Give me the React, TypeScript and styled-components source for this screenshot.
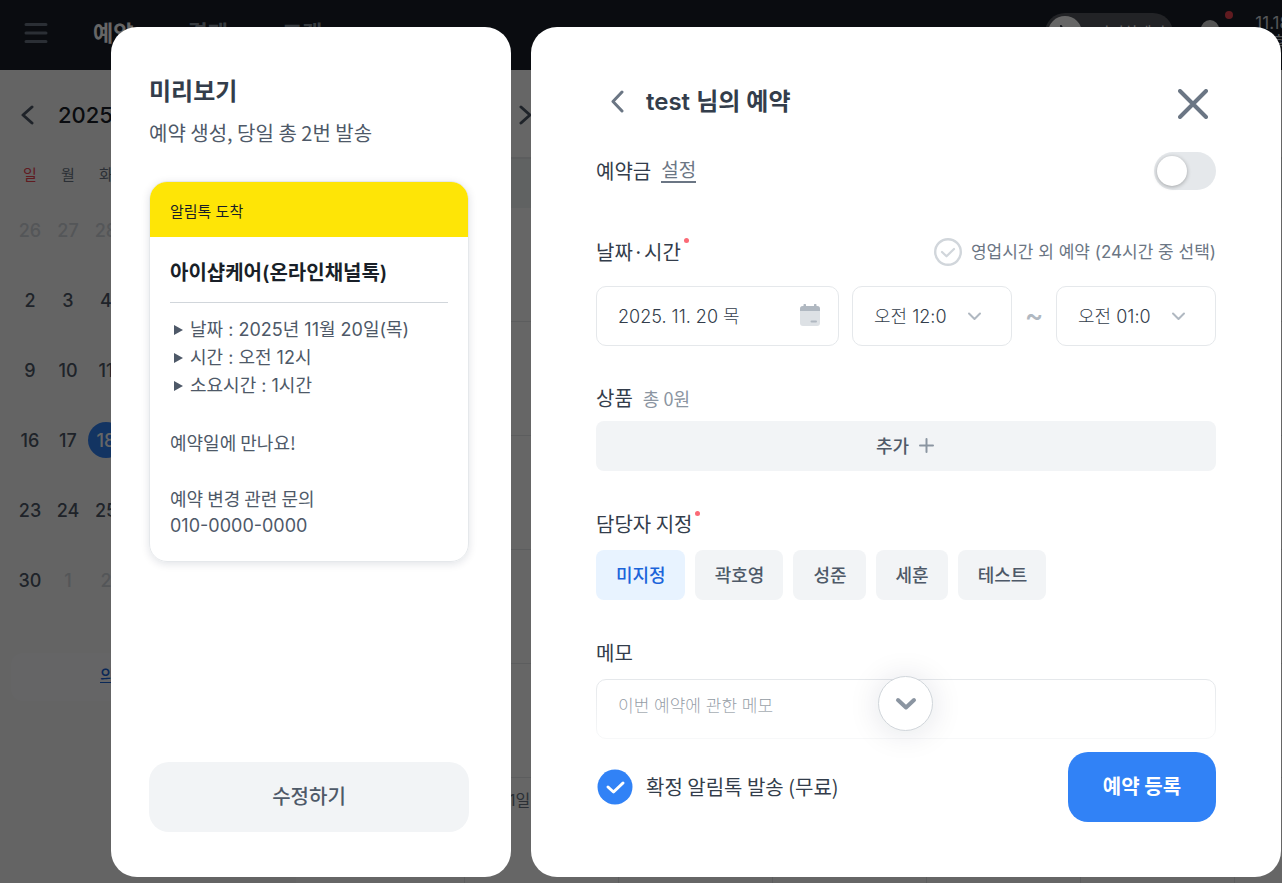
import React from "react";
import styled, { createGlobalStyle, css } from "styled-components";

const color = {
  ink: "#191f28",
  strong: "#333d4b",
  body: "#4e5968",
  sub: "#6b7684",
  muted: "#8b95a1",
  faint: "#b0b8c1",
  line: "#d1d6db",
  border: "#e5e8eb",
  fill: "#f2f4f6",
  blue: "#3182f6",
  red: "#f04452",
};

const koreanFont = `"Noto Sans CJK KR", Inter, sans-serif`;
const latinFont = `Inter, "Noto Sans CJK KR", sans-serif`;

const Global = createGlobalStyle`
  *, *::before, *::after { box-sizing: border-box; }
  body {
    margin: 0;
    overflow: hidden;
    color: ${color.strong};
    font-family: ${latinFont};
  }
  button, input, select { font: inherit; color: inherit; }
  button { border: 0; padding: 0; background: none; cursor: pointer; }
  h1, h2, h3, p, ul, fieldset { margin: 0; padding: 0; border: 0; }
  ul { list-style: none; }
  svg { display: block; flex: none; }
`;

/* ---------- page behind the dialogs ---------- */

const Page = styled.div`
  display: flex;
  flex-direction: column;
  height: 100vh;
  overflow: hidden;
`;

const TopBar = styled.header`
  display: flex;
  flex: none;
  align-items: center;
  height: 70px;
  padding: 0 0 4px 24px;
  background: ${color.ink};
  color: #fff;
`;

const Nav = styled.nav`
  display: flex;
  gap: 54px;
  margin-left: 45px;
`;

const NavLink = styled.a<{ $active?: boolean }>`
  color: ${(p) => (p.$active ? "#fff" : color.muted)};
  font-size: 22px;
  font-weight: 700;
  line-height: 30px;
  text-decoration: none;
`;

const TopTools = styled.div`
  display: flex;
  align-items: center;
  gap: 25px;
  margin: 0 -8px 0 auto;
`;

const ShopToggle = styled.button`
  display: flex;
  align-items: center;
  gap: 14px;
  width: 128px;
  height: 40px;
  padding: 3px;
  border-radius: 20px;
  background: #56585f;
  color: #fff;
  font-size: 15px;
  line-height: 16px;
  white-space: nowrap;
`;

const Knob = styled.span`
  display: grid;
  place-items: center;
  width: 34px;
  height: 34px;
  border-radius: 50%;
  background: #fff;
`;

const Bell = styled.button`
  position: relative;
  width: 32px;
  height: 28px;
`;

const Badge = styled.i`
  position: absolute;
  top: -8px;
  right: -3px;
  width: 8px;
  height: 8px;
  border-radius: 50%;
  background: ${color.red};
`;

const Clock = styled.div`
  color: ${color.line};
  font-size: 17px;
  line-height: 20px;
  white-space: nowrap;
`;

const Main = styled.div`
  display: flex;
  flex: 1;
`;

const Sidebar = styled.aside`
  flex: none;
  width: 296px;
  padding: 25px 11px;
  background: #fafafb;
`;

const Month = styled.div`
  display: flex;
  align-items: center;
  gap: 24px;
  padding-left: 9px;
  color: ${color.ink};
  font-size: 22px;
  font-weight: 500;
  line-height: 40px;
`;

const Calendar = styled.table`
  width: 266px;
  margin-top: 19px;
  border-collapse: collapse;
  table-layout: fixed;
  font-size: 18px;
  text-align: center;
`;

const DayName = styled.th<{ $sunday?: boolean }>`
  height: 41px;
  padding: 0 0 2px;
  color: ${(p) => (p.$sunday ? color.red : color.sub)};
  font-size: 15px;
  font-weight: 400;
`;

const Day = styled.td<{ $out?: boolean; $today?: boolean }>`
  height: 70px;
  padding: 0;
  color: ${(p) => (p.$out ? color.line : color.body)};
  font-weight: 500;
  ${(p) =>
    p.$today &&
    css`
      span {
        display: grid;
        place-items: center;
        width: 36px;
        height: 36px;
        margin: 0 auto;
        border-radius: 50%;
        background: ${color.blue};
        color: #fff;
      }
    `}
`;

const SideLink = styled.a`
  display: block;
  margin-top: 38px;
  padding: 0 0 4px 89px;
  border-radius: 12px;
  background: #fcfdfe;
  color: #1b64da;
  font-size: 16px;
  font-weight: 500;
  line-height: 44px;
`;

const Schedule = styled.section`
  flex: 1;
  min-width: 0;
`;

const ScheduleHead = styled.div`
  display: flex;
  align-items: center;
  height: 89px;
  padding: 2px 0 0 222px;
  border-bottom: 2px solid ${color.border};
`;

const TimeRow = styled.div<{ $tint?: boolean }>`
  height: ${(p) => (p.$tint ? 49 : 114)}px;
  border-bottom: ${(p) => (p.$tint ? 0 : 1)}px solid ${color.border};
  background: ${(p) => (p.$tint ? "#f0f6f4" : "transparent")};
`;

const DayColumns = styled.div`
  display: grid;
  grid-template-columns: repeat(6, 154px);
  height: 200px;
  padding-left: 168px;
`;

const DayColumn = styled.div`
  padding: 9px 0 0 44px;
  border-left: 1px solid ${color.border};
  color: ${color.sub};
  font-size: 16px;
`;

/* ---------- dialogs ---------- */

const Overlay = styled.div`
  position: fixed;
  inset: 0;
  display: flex;
  justify-content: flex-end;
  gap: 20px;
  padding: 27px 1px 6px;
  background: rgba(0, 0, 0, 0.6);
`;

const Panel = styled.section`
  display: flex;
  flex-direction: column;
  overflow: hidden;
  border-radius: 26px;
  background: #fff;
`;

const PreviewPanel = styled(Panel)`
  flex: 0 0 400px;
  padding: 49px 42px 45px 38px;
`;

const Title = styled.h2`
  font-size: 24px;
  font-weight: 600;
  line-height: 32px;
`;

const Lead = styled.p`
  margin-top: 9px;
  color: ${color.body};
  font-family: ${koreanFont};
  font-size: 20px;
  line-height: 32px;
  white-space: nowrap;
`;

const TalkCard = styled.article`
  margin-top: 32px;
  overflow: hidden;
  border: 1px solid ${color.border};
  border-radius: 18px;
  box-shadow: 0 2px 8px rgba(0, 27, 55, 0.12);
`;

const TalkHead = styled.header`
  height: 55px;
  padding: 0 20px;
  background: #fee506;
  color: ${color.ink};
  font-size: 15px;
  line-height: 60px;
`;

const TalkBody = styled.div`
  padding: 20px 20px 21px;
  color: ${color.body};
  font-size: 18px;
  line-height: 28px;
`;

const TalkTitle = styled.h3`
  margin-bottom: 13px;
  padding-bottom: 13px;
  border-bottom: 1px solid ${color.line};
  color: ${color.ink};
  font-size: 20px;
  font-weight: 600;
  line-height: 32px;
  white-space: nowrap;
`;

const Fact = styled.li`
  display: flex;
  align-items: center;
  gap: 7px;
  padding-left: 4px;
  white-space: nowrap;
`;

const Note = styled.p`
  margin-top: 28px;
  font-family: ${koreanFont};
`;

const Phone = styled.p`
  font-family: ${latinFont};
`;

const EditButton = styled.button`
  height: 70px;
  margin-top: auto;
  padding-bottom: 4px;
  border-radius: 20px;
  background: ${color.fill};
  color: ${color.body};
  font-size: 20px;
  font-weight: 500;
`;

const BookingPanel = styled(Panel)`
  flex: 0 1 750px;
  padding: 55px 65px;
`;

const BookingHead = styled.header`
  display: flex;
  align-items: center;
  height: 40px;
  padding: 0 8px 0 14px;
`;

const BookingTitle = styled(Title)`
  flex: 1;
  margin-left: 21px;
`;

const CloseButton = styled.button`
  padding-top: 4px;
`;

const Row = styled.div`
  display: flex;
  align-items: center;
`;

const Label = styled.span`
  font-family: ${koreanFont};
  font-size: 20px;
  line-height: 28px;
`;

const FieldLabel = styled.label`
  font-family: ${koreanFont};
  font-size: 20px;
  line-height: 28px;
`;

const Required = styled.i`
  align-self: flex-start;
  width: 5px;
  height: 5px;
  margin: 1px 0 0 3px;
  border-radius: 50%;
  background: #fb6a76;
`;

const DepositRow = styled(Row)`
  height: 38px;
  margin-top: 30px;
`;

const SettingLink = styled.a`
  margin: 2px 0 0 10px;
  border-bottom: 2px solid ${color.sub};
  color: ${color.sub};
  font-size: 19px;
  line-height: 20px;
  text-decoration: none;
`;

const Switch = styled.input`
  width: 62px;
  height: 38px;
  margin: 0 0 0 auto;
  padding: 3px;
  border-radius: 19px;
  background: ${color.border};
  appearance: none;

  &::before {
    content: "";
    display: block;
    width: 30px;
    height: 30px;
    margin-top: 1px;
    border-radius: 50%;
    background: #fff;
    box-shadow: 0 1px 4px rgba(0, 0, 0, 0.3);
  }
`;

const DateRow = styled(Row)`
  margin-top: 47px;
`;

const CheckLabel = styled.label`
  display: flex;
  align-items: center;
  gap: 9px;
  margin-left: auto;
  color: ${color.sub};
  font-size: 17px;
  line-height: 30px;
  white-space: nowrap;
`;

const HiddenCheck = styled.input`
  position: absolute;
  opacity: 0;
`;

const Fields = styled.div`
  display: grid;
  grid-template-columns: 243px 13px 1fr 44px 1fr;
  align-items: center;
  margin-top: 19px;
`;

const Field = styled.div`
  display: flex;
  align-items: center;
  height: 60px;
  padding: 0 18px 2px 21px;
  border: 1px solid ${color.border};
  border-radius: 10px;
  font-size: 18px;
`;

const TimeField = styled(Field)`
  padding: 0 29px 0 21px;
`;

const FirstTime = styled(TimeField)`
  grid-column: 3;
`;

const DateInput = styled.input`
  flex: 1;
  min-width: 0;
  padding: 0;
  border: 0;
  outline: 0;
  font-weight: 300;
`;

const TimeSelect = styled.select`
  flex: 1;
  min-width: 0;
  padding: 0;
  border: 0;
  outline: 0;
  background: none;
  appearance: none;
  font-weight: 300;
  white-space: nowrap;
`;

const Tilde = styled.span`
  padding-bottom: 2px;
  color: ${color.faint};
  font-size: 28px;
  font-weight: 500;
  line-height: 30px;
  text-align: center;
`;

const ProductRow = styled(Row)`
  gap: 10px;
  align-items: baseline;
  margin-top: 38px;
`;

const Total = styled.span`
  color: ${color.muted};
  font-family: ${koreanFont};
  font-size: 18px;
  line-height: 28px;
`;

const AddButton = styled.button`
  display: flex;
  align-items: center;
  justify-content: center;
  gap: 10px;
  height: 50px;
  margin-top: 9px;
  padding: 0 2px 2px 0;
  border-radius: 8px;
  background: ${color.fill};
  color: ${color.body};
  font-size: 18px;
  font-weight: 500;
`;

const StaffRow = styled(Row)`
  margin-top: 39px;
`;

const Chips = styled.div`
  display: flex;
  flex-wrap: wrap;
  gap: 10px;
  margin-top: 12px;
`;

const Chip = styled.button<{ $on?: boolean }>`
  height: 50px;
  padding: 0 19px 2px 20px;
  border-radius: 8px;
  background: ${(p) => (p.$on ? "#e8f3ff" : color.fill)};
  color: ${(p) => (p.$on ? "#1b64da" : color.body)};
  font-size: 18px;
  font-weight: 500;
`;

const MemoArea = styled.div`
  position: relative;
  display: flex;
  flex-direction: column;
  margin-top: 39px;

  &::after {
    content: "";
    position: absolute;
    inset: auto 0 0;
    height: 60px;
    background: linear-gradient(rgba(255, 255, 255, 0), rgba(255, 255, 255, 0.7));
    pointer-events: none;
  }
`;

const MemoInput = styled.input`
  height: 60px;
  margin-top: 12px;
  padding: 0 21px 6px;
  border: 1px solid ${color.border};
  border-radius: 10px;
  outline: 0;
  font-size: 17px;
  font-weight: 300;

  &::placeholder {
    color: ${color.sub};
    opacity: 1;
  }
`;

const ScrollButton = styled.button`
  position: absolute;
  z-index: 1;
  bottom: 8px;
  left: 50%;
  display: grid;
  place-items: center;
  width: 55px;
  height: 55px;
  margin-left: -28px;
  border: 1px solid ${color.line};
  border-radius: 50%;
  background: #fff;
  box-shadow: 0 2px 32px rgba(0, 27, 55, 0.12);
`;

const Footer = styled.footer`
  display: flex;
  align-items: center;
  margin-top: 13px;
`;

const ConfirmLabel = styled.label`
  display: flex;
  align-items: center;
  gap: 13px;
  font-family: ${koreanFont};
  font-size: 20px;
  line-height: 30px;
`;

const SubmitButton = styled.button`
  width: 148px;
  height: 70px;
  margin-left: auto;
  padding-bottom: 3px;
  border-radius: 20px;
  background: ${color.blue};
  color: #fff;
  font-size: 20px;
  font-weight: 700;
`;

/* ---------- icons ---------- */

type StrokeProps = { d: string; w: number; h: number; stroke: string; width: number };

const Stroke = ({ d, w, h, stroke, width }: StrokeProps) => (
  <svg width={w} height={h} viewBox={`0 0 ${w} ${h}`} fill="none" aria-hidden="true">
    <path d={d} stroke={stroke} strokeWidth={width} strokeLinecap="round" strokeLinejoin="round" />
  </svg>
);

const SelectArrow = () => <Stroke d="M2 2.500 7.500 8 13 2.500" w={15} h={11} stroke={color.faint} width={2} />;

const CalendarIcon = () => (
  <svg width="20" height="22" viewBox="0 0 20 22" aria-hidden="true">
    <rect y="2" width="20" height="20" rx="3" fill="#dde1e5" />
    <path d="M0 7V5a3 3 0 0 1 3-3h.5V1a1 1 0 0 1 2.500 0v1h8V1a1 1 0 0 1 2.500 0v1h.5a3 3 0 0 1 3 3v2z" fill={color.faint} />
    <rect x="10.500" y="16.500" width="6.500" height="2" rx="1" fill={color.faint} />
  </svg>
);

const RingCheck = () => (
  <svg width="28" height="28" viewBox="0 0 28 28" fill="none" aria-hidden="true">
    <circle cx="14" cy="14" r="12.800" stroke={color.line} strokeWidth="2.400" />
    <path d="m8 14 4.500 4.300L20 11" stroke={color.line} strokeWidth="2.200" strokeLinecap="round" strokeLinejoin="round" />
  </svg>
);

const SolidCheck = () => (
  <svg width="37" height="36" viewBox="0 0 37 36" fill="none" aria-hidden="true">
    <circle cx="19" cy="18" r="17.500" fill={color.blue} />
    <path d="m12 18 5.500 5L27 14" stroke="#fff" strokeWidth="3" strokeLinecap="round" strokeLinejoin="round" />
  </svg>
);

const Triangle = () => (
  <svg width="9" height="10" viewBox="0 0 9 10" aria-hidden="true">
    <path d="M0 0 9 5 0 10z" fill={color.body} />
  </svg>
);

/* ---------- data ---------- */

const dayNames = ["일", "월", "화", "수", "목", "금", "토"];
const weeks = [
  [26, 27, 28, 29, 30, 31, 1],
  [2, 3, 4, 5, 6, 7, 8],
  [9, 10, 11, 12, 13, 14, 15],
  [16, 17, 18, 19, 20, 21, 22],
  [23, 24, 25, 26, 27, 28, 29],
  [30, 1, 2, 3, 4, 5, 6],
];
const isOutside = (week: number, day: number) => (week === 0 && day > 20) || (week === 5 && day < 20);

const facts = ["날짜 : 2025년 11월 20일(목)", "시간 : 오전 12시", "소요시간 : 1시간"];
const staff = ["미지정", "곽호영", "성준", "세훈", "테스트"];

const Background = () => (
  <Page aria-hidden="true">
    <TopBar>
      <Stroke d="M2 2.500H22M2 11H22M2 19.500H22" w={24} h={22} stroke={color.sub} width={3} />
      <Nav>
        <NavLink href="#booking" $active>예약</NavLink>
        <NavLink href="#payment">결제</NavLink>
        <NavLink href="#customer">고객</NavLink>
      </Nav>
      <TopTools>
        <ShopToggle>
          <Knob>
            <Stroke d="M6 3 9 9V13" w={20} h={20} stroke={color.strong} width={2} />
          </Knob>
          아이샵케어
        </ShopToggle>
        <Bell>
          <svg width="24" height="28" viewBox="0 0 24 28" aria-hidden="true">
            <path d="M12 1a9 9 0 0 0-9 9v8l-2 4h22l-2-4v-8a9 9 0 0 0-9-9z" fill="#d0d0d0" />
          </svg>
          <Badge />
        </Bell>
        <Clock>
          11.18
          <br />
          오후
        </Clock>
      </TopTools>
    </TopBar>
    <Main>
      <Sidebar>
        <Month>
          <Stroke d="M12 3 3 11 12 19" w={14} h={22} stroke={color.body} width={3} />
          2025. 11
        </Month>
        <Calendar>
          <thead>
            <tr>
              {dayNames.map((name, i) => (
                <DayName key={name} $sunday={i === 0}>{name}</DayName>
              ))}
            </tr>
          </thead>
          <tbody>
            {weeks.map((week, w) => (
              <tr key={w}>
                {week.map((day) => (
                  <Day key={day} $out={isOutside(w, day)} $today={day === 18}>
                    <span>{day}</span>
                  </Day>
                ))}
              </tr>
            ))}
          </tbody>
        </Calendar>
        <SideLink href="#feedback">의견 보내기</SideLink>
      </Sidebar>
      <Schedule>
        <ScheduleHead>
          <Stroke d="M3 3 12 11 3 19" w={14} h={22} stroke={color.body} width={3} />
        </ScheduleHead>
        <TimeRow $tint />
        <TimeRow />
        <TimeRow />
        <TimeRow />
        <TimeRow />
        <TimeRow />
        <DayColumns>
          <DayColumn>1일</DayColumn>
          <DayColumn />
          <DayColumn />
          <DayColumn />
          <DayColumn />
          <DayColumn />
        </DayColumns>
      </Schedule>
    </Main>
  </Page>
);

export default function App() {
  return (
    <>
      <Global />
      <Background />
      <Overlay>
        <PreviewPanel role="dialog" aria-label="미리보기">
          <Title>미리보기</Title>
          <Lead>예약 생성, 당일 총 2번 발송</Lead>
          <TalkCard>
            <TalkHead>알림톡 도착</TalkHead>
            <TalkBody>
              <TalkTitle>아이샵케어(온라인채널톡)</TalkTitle>
              <ul>
                {facts.map((fact) => (
                  <Fact key={fact}>
                    <Triangle />
                    {fact}
                  </Fact>
                ))}
              </ul>
              <Note>예약일에 만나요!</Note>
              <Note>예약 변경 관련 문의</Note>
              <Phone>010-0000-0000</Phone>
            </TalkBody>
          </TalkCard>
          <EditButton>수정하기</EditButton>
        </PreviewPanel>

        <BookingPanel role="dialog" aria-label="test 님의 예약">
          <BookingHead>
            <button aria-label="뒤로">
              <Stroke d="M12 2 3 11.500 12 21" w={15} h={24} stroke={color.sub} width={3} />
            </button>
            <BookingTitle>test 님의 예약</BookingTitle>
            <CloseButton aria-label="닫기">
              <Stroke d="M2 2 28 28M28 2 2 28" w={30} h={30} stroke={color.sub} width={4} />
            </CloseButton>
          </BookingHead>

          <DepositRow>
            <FieldLabel htmlFor="deposit">예약금</FieldLabel>
            <SettingLink href="#deposit">설정</SettingLink>
            <Switch id="deposit" type="checkbox" role="switch" />
          </DepositRow>

          <DateRow>
            <FieldLabel htmlFor="date">날짜·시간</FieldLabel>
            <Required />
            <CheckLabel>
              <HiddenCheck type="checkbox" />
              <RingCheck />
              영업시간 외 예약 (24시간 중 선택)
            </CheckLabel>
          </DateRow>
          <Fields>
            <Field>
              <DateInput id="date" defaultValue="2025. 11. 20 목" />
              <CalendarIcon />
            </Field>
            <FirstTime>
              <TimeSelect aria-label="시작 시간">
                <option>오전 12:0</option>
              </TimeSelect>
              <SelectArrow />
            </FirstTime>
            <Tilde>~</Tilde>
            <TimeField>
              <TimeSelect aria-label="종료 시간">
                <option>오전 01:0</option>
              </TimeSelect>
              <SelectArrow />
            </TimeField>
          </Fields>

          <ProductRow>
            <Label>상품</Label>
            <Total>총 0원</Total>
          </ProductRow>
          <AddButton>
            추가
            <Stroke d="M7.500 1V14M1 7.500H14" w={15} h={15} stroke={color.muted} width={2} />
          </AddButton>

          <StaffRow>
            <Label>담당자 지정</Label>
            <Required />
          </StaffRow>
          <Chips>
            {staff.map((name, i) => (
              <Chip key={name} $on={i === 0} aria-pressed={i === 0}>{name}</Chip>
            ))}
          </Chips>

          <MemoArea>
            <FieldLabel htmlFor="memo">메모</FieldLabel>
            <MemoInput id="memo" placeholder="이번 예약에 관한 메모" />
            <ScrollButton aria-label="아래로">
              <Stroke d="M3 3 11 10.500 19 3" w={22} h={14} stroke={color.muted} width={4} />
            </ScrollButton>
          </MemoArea>

          <Footer>
            <ConfirmLabel>
              <HiddenCheck type="checkbox" defaultChecked />
              <SolidCheck />
              확정 알림톡 발송 (무료)
            </ConfirmLabel>
            <SubmitButton>예약 등록</SubmitButton>
          </Footer>
        </BookingPanel>
      </Overlay>
    </>
  );
}
